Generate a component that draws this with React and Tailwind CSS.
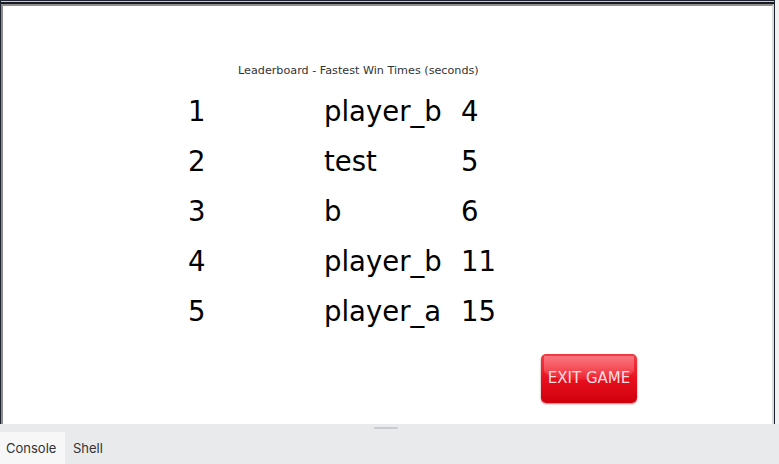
const rows = [
  ["1", "player_b", "4"],
  ["2", "test", "5"],
  ["3", "b", "6"],
  ["4", "player_b", "11"],
  ["5", "player_a", "15"],
];

export default function App() {
  return (
    <div className="w-[779px] h-[464px] flex flex-col overflow-hidden bg-[#f2f2f2]">
      {/* game window */}
      <div className="h-[424px] w-[775px] border-t border-l border-r border-[#1d2330] bg-[#c6cad2] pt-px">
        <div className="h-full border-t-2 border-[#171a21]">
          <div className="h-full border-t-2 border-l-2 border-[#8e8e8e] border-r-2 border-r-[#dcdcdc] bg-white font-['DejaVu_Sans',sans-serif]">
            <div className="pt-[58px] pl-[235px] text-[11.2px] leading-[14px] text-[#333]">
              Leaderboard - Fastest Win Times (seconds)
            </div>
            <div className="mt-[8px] pl-[185px] grid grid-cols-[136px_137px_auto] text-[27.5px] leading-[50px] text-black">
              {rows.map((r, i) => (
                <div key={i} className="contents">
                  <div>{r[0]}</div>
                  <div>{r[1]}</div>
                  <div>{r[2]}</div>
                </div>
              ))}
            </div>
            <div className="mt-[18px] pl-[538px]">
              <button className="relative w-[96px] h-[49px] rounded-[5px] overflow-hidden bg-gradient-to-b from-[#f23a44] via-[#e8101e] to-[#d0000c] shadow-[0_1px_2px_rgba(120,0,0,0.5)] flex items-center justify-center">
                <span className="absolute left-[3px] right-[3px] top-[2px] h-[24px] rounded-b-[40%] bg-gradient-to-b from-[#ff8f98]/70 to-[#ff5a66]/20"></span>
                <span className="relative text-[15px] text-[#ffdfe2] font-['DejaVu_Sans',sans-serif]">EXIT GAME</span>
              </button>
            </div>
          </div>
        </div>
      </div>
      {/* bottom panel */}
      <div className="flex-1 bg-[#e9eaec] flex flex-col">
        <div className="h-[8px] flex pl-[374px]">
          <div className="mt-[3px] w-[24px] h-[2px] bg-[#cacbd0] rounded-full"></div>
        </div>
        <div className="flex-1 flex font-['Inter','Noto_Sans',sans-serif] text-[13px] text-[#333]">
          <div className="w-[65px] bg-[#f7f7f8] flex items-center pl-[6px] pt-[1px]">Console</div>
          <div className="flex items-center pl-[8px] pt-[1px]">Shell</div>
        </div>
      </div>
    </div>
  );
}
